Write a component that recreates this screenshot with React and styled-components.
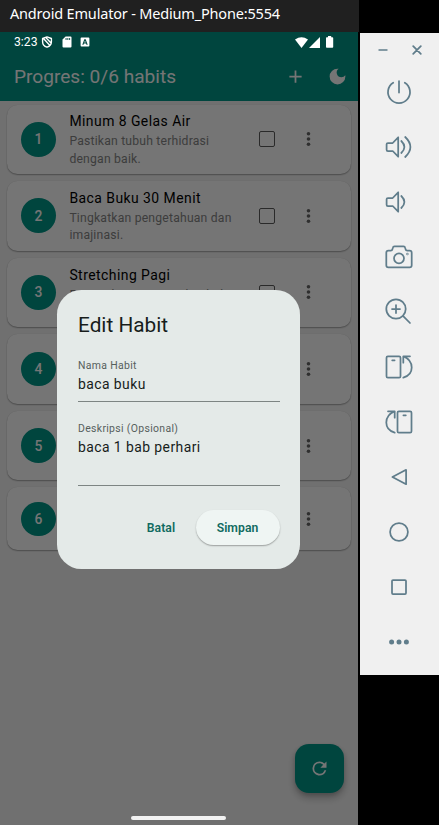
import React from "react";
import styled, { createGlobalStyle } from "styled-components";

const GlobalStyle = createGlobalStyle`
  *, *::before, *::after { box-sizing: border-box; }
  body { margin: 0; background: #000; overflow: hidden; }
`;

const Desktop = styled.div`
  display: flex;
  gap: 2px;
  width: 439px;
  height: 825px;
  background: #000;
  font-family: Roboto, sans-serif;
`;

const EmulatorWindow = styled.div`
  display: flex;
  flex-direction: column;
  width: 358px;
`;

const WindowTitle = styled.div`
  flex: none;
  width: 359px;
  height: 32px;
  padding-left: 10px;
  background: #202020;
  color: #fff;
  font: 14.5px/27px "Noto Sans", "Open Sans", sans-serif;
  letter-spacing: -0.18px;
  white-space: nowrap;
`;

const Screen = styled.main`
  position: relative;
  display: flex;
  flex-direction: column;
  flex: 1;
  min-height: 0;
  background: #f5f5f5;
`;

const AppBar = styled.header`
  display: flex;
  align-items: center;
  height: 68.5px;
  padding: 21px 10.5px 0 14px;
  background: #009688;
  color: #fff;
`;

const AppTitle = styled.h1`
  flex: 1;
  margin: 0;
  font-size: 19.1px;
  font-weight: 400;
  line-height: 24px;
`;

const AppActions = styled.div`
  display: flex;
  gap: 21px;
`;

const StatusBar = styled.div`
  position: absolute;
  inset: 0 0 auto 0;
  display: flex;
  align-items: center;
  height: 20px;
  padding: 0 24px 0 14px;
  color: #fff;
  font-size: 12.2px;
`;

const StatusGroup = styled.div`
  display: flex;
  align-items: center;
  gap: ${(p) => p.$gap}px;
  margin-left: ${(p) => (p.$end ? "auto" : "3.5px")};
`;

const HabitList = styled.ul`
  display: flex;
  flex-direction: column;
  gap: 7px;
  margin: 0;
  padding: 4px 7px;
  list-style: none;
`;

const HabitCard = styled.li`
  display: flex;
  align-items: center;
  height: ${(p) => (p.$short ? 63 : 69.6)}px;
  padding: 0 14px;
  border-radius: 10.5px;
  background: #fff;
  box-shadow: 0 1px 1.5px rgba(0, 0, 0, 0.32), 0 0 1px rgba(0, 0, 0, 0.12);
`;

const HabitNumber = styled.div`
  display: grid;
  place-items: center;
  flex: none;
  width: 34.8px;
  height: 34.8px;
  margin-right: 13.6px;
  border-radius: 50%;
  background: #009688;
  color: #fff;
  font-size: 13.9px;
  font-weight: 500;
`;

const HabitText = styled.div`
  width: 170px;
`;

const HabitName = styled.div`
  color: #000;
  font-size: 13.93px;
  line-height: 21px;
  letter-spacing: 0.46px;
  white-space: nowrap;
`;

const HabitDescription = styled.div`
  margin-bottom: -1px;
  padding-top: 1px;
  color: #858585;
  font-size: 12.18px;
  line-height: 17.4px;
  letter-spacing: 0.2px;
`;

const Checkbox = styled.span`
  width: 15.7px;
  height: 15.7px;
  margin: 0 0 0 19.5px;
  border: 1.5px solid #5c5c5c;
  border-radius: 2px;
`;

const MoreDots = styled.svg`
  width: 5px;
  height: 16px;
  margin-left: 31.5px;
  fill: #666;
`;

const RefreshButton = styled.button`
  position: absolute;
  right: 14px;
  bottom: 32px;
  display: grid;
  place-items: center;
  width: 49px;
  height: 49px;
  padding: 0;
  border: 0;
  border-radius: 14px;
  background: #009688;
  color: #fff;
  box-shadow: 0 5px 9px rgba(0, 0, 0, 0.24), 0 2px 4px rgba(0, 0, 0, 0.14);
`;

const Scrim = styled.div`
  position: absolute;
  inset: 0;
  background: rgba(0, 0, 0, 0.54);
`;

const HomeIndicator = styled.div`
  position: absolute;
  left: 131px;
  bottom: 5px;
  width: 95px;
  height: 4px;
  border-radius: 2px;
  background: #f2f2f2;
`;

const Dialog = styled.section`
  position: absolute;
  left: 57px;
  top: 258px;
  display: flex;
  flex-direction: column;
  width: 243px;
  height: 279px;
  padding: 21px 20.5px 24px 21px;
  border-radius: 24.4px;
  background: #e4eae8;
`;

const DialogTitle = styled.h2`
  margin: 0 0 14px;
  color: #171d1b;
  font-size: 20.8px;
  font-weight: 400;
  line-height: 28px;
`;

const Field = styled.div`
  display: flex;
  flex-direction: column;
  height: ${(p) => p.$height}px;
  margin-bottom: ${(p) => p.$after}px;
  padding-top: 5.5px;
  border-bottom: 1px solid #7d8583;
`;

const FieldLabel = styled.span`
  color: #56605d;
  font-size: 10.45px;
  line-height: 14px;
  letter-spacing: 0.33px;
`;

const FieldValue = styled.span`
  color: #171d1b;
  font-size: 13.93px;
  line-height: 23px;
  letter-spacing: 0.43px;
`;

const DialogActions = styled.div`
  display: flex;
  justify-content: flex-end;
  gap: 7px;
  margin-top: auto;
`;

const DialogButton = styled.button`
  height: 35px;
  width: ${(p) => (p.$raised ? 84 : 55)}px;
  padding: 0;
  border: 0;
  border-radius: 17.5px;
  background: ${(p) => (p.$raised ? "#eff5f3" : "transparent")};
  box-shadow: ${(p) => (p.$raised ? "0 1px 1.5px rgba(0,0,0,.32)" : "none")};
  color: #106a60;
  font: 600 12.18px/36px Roboto, sans-serif;
  letter-spacing: 0.05px;
`;

const ControlPanel = styled.aside`
  display: flex;
  flex-direction: column;
  width: 79px;
  height: 642px;
  margin-top: 33px;
  background: #f0f0f0;
  color: #607d8b;
`;

const PanelHeader = styled.div`
  display: flex;
  align-items: center;
  gap: 24px;
  height: 31.5px;
  padding: 3px 0 0 17.5px;
`;

const PanelButton = styled.div`
  display: grid;
  place-items: center;
  width: 78px;
  height: 55px;
`;

const LineIcon = styled.svg`
  display: block;
  fill: none;
  stroke: currentColor;
  stroke-width: 1.75;
  stroke-linecap: round;
  stroke-linejoin: round;
`;

const SolidIcon = styled.svg`
  display: block;
  fill: currentColor;
`;

const Speaker = () => (
  <path d="M-12.4-2.7q0-1.3 1.3-1.3h4.8L-.8-9.7V9.7L-6.3 4h-4.8q-1.3 0-1.3-1.3z" />
);

const panelIcons = [
  ["power", <><path d="M-5.8-9.3A11 11 0 1 0 5.8-9.3" /><path d="M0-11V.5" /></>],
  ["volume-up", <><Speaker /><path d="M2.3-6Q8.5 0 2.3 6M6.2-10Q16.6 0 6.2 10" /></>],
  ["volume-down", <><Speaker /><path d="M2.3-6Q8.5 0 2.3 6" /></>],
  ["camera", <><path d="M-10.6-6.4h2.3q1.5 0 1.8-1.5l.3-1.2q.3-1.6 1.7-1.6h9q1.4 0 1.7 1.6l.3 1.2q.3 1.5 1.8 1.5h2.3q2.1 0 2.1 2.1V8.2q0 2.1-2.1 2.1h-21.2q-2.1 0-2.1-2.1V-4.3q0-2.1 2.1-2.1z" /><circle cx="0" cy="1.3" r="5" /><circle cx="8.4" cy="-3" r=".3" /></>],
  ["zoom", <><circle cx="-3" cy="-3" r="9.7" /><path d="M4.2 4.2L11 11M-7-3h8M-3-7v8" /></>],
  ["rotate-left", <><rect x="-12.5" y="-10.7" width="14" height="21.4" rx="1.4" /><path d="M-6.8-6.7h2.4M11-10.7H4.3v6.4M4.3-10.7C15.5-6 15.5 7.5 4.3 10.7" /></>],
  ["rotate-right", <><rect x="-1.5" y="-10.7" width="14" height="21.4" rx="1.4" /><path d="M4.4-6.7h2.4M-11-10.7h6.7v6.4M-4.3-10.7C-15.5-6-15.5 7.5-4.3 10.7" /></>],
  ["back", <path d="M-6.6 0L7.1-7.2V7.2z" />],
  ["home", <circle r="8.9" />],
  ["overview", <rect x="-7" y="-7" width="14" height="14" rx="1" />],
  ["more", <g fill="currentColor" stroke="none"><circle cx="-7.4" r="2.5" /><circle r="2.5" /><circle cx="7.4" r="2.5" /></g>],
];

const habits = [
  { name: "Minum 8 Gelas Air", description: "Pastikan tubuh terhidrasi dengan baik." },
  { name: "Baca Buku 30 Menit", description: "Tingkatkan pengetahuan dan imajinasi." },
  { name: "Stretching Pagi", description: "Regangkan otot untuk tubuh yang lebih segar." },
  {},
  {},
  { short: true },
];

function Habit({ number, habit }) {
  return (
    <HabitCard $short={habit.short}>
      <HabitNumber>{number}</HabitNumber>
      <HabitText>
        {habit.name && <HabitName>{habit.name}</HabitName>}
        {habit.description && <HabitDescription>{habit.description}</HabitDescription>}
      </HabitText>
      <Checkbox />
      <MoreDots viewBox="0 0 5 16">
        <circle cx="2.5" cy="2.8" r="1.8" />
        <circle cx="2.5" cy="8" r="1.8" />
        <circle cx="2.5" cy="13.2" r="1.8" />
      </MoreDots>
    </HabitCard>
  );
}

function PhoneStatus() {
  return (
    <StatusBar>
      <span>3:23</span>
      <StatusGroup $gap={8.5}>
        <LineIcon width="12" height="12" viewBox="0 0 12 12">
          <path d="M6 .9l4.400 1.600v3.200C10.400 8.400 8.700 10.300 6 11.200 3.300 10.300 1.600 8.400 1.600 5.700V2.500zM2.500 2.500l6.200 6.700M5 1.800l4.800 5" strokeWidth="1.4" />
        </LineIcon>
        <SolidIcon width="10" height="12" viewBox="0 0 10 12">
          <path fillRule="evenodd" d="M3.600.500H8.500q1 0 1 1v9q0 1-1 1h-7q-1 0-1-1V3.600zM3.600 2v2h.9V2zM5.400 2v2h.9V2zM7.200 2v2h.9V2z" />
        </SolidIcon>
        <SolidIcon width="10" height="10" viewBox="0 0 10 10">
          <path fillRule="evenodd" d="M1.500.600h7q.9 0 .9.900v7q0 .9-.9.900h-7q-.9 0-.9-.9v-7q0-.9.900-.9zM4.300 2.200L2.300 7.800h1.200L3.900 6.600h2.200l.4 1.200h1.200L5.700 2.200zM5 3.500l.7 2.100H4.300z" />
        </SolidIcon>
      </StatusGroup>
      <StatusGroup $end $gap={1}>
        <SolidIcon width="13" height="11" viewBox="0 0 13 11">
          <path d="M0 2.500Q6.500-2.200 13 2.500L6.500 11z" />
        </SolidIcon>
        <SolidIcon width="11" height="11" viewBox="0 0 11 11">
          <path d="M11 0v11H0z" />
        </SolidIcon>
        <SolidIcon width="13" height="12" viewBox="0 0 13 12">
          <path d="M7 0h3.200v1.200h1.200q.8 0 .8.800v9q0 .8-.8.800H5.800Q5 11.800 5 11V2q0-.8.800-.8H7z" />
        </SolidIcon>
      </StatusGroup>
    </StatusBar>
  );
}

export default function App() {
  return (
    <>
      <GlobalStyle />
      <Desktop>
        <EmulatorWindow>
          <WindowTitle>Android Emulator - Medium_Phone:5554</WindowTitle>
          <Screen>
            <AppBar>
              <AppTitle>Progres: 0/6 habits</AppTitle>
              <AppActions>
                <SolidIcon width="21" height="21" viewBox="0 0 24 24">
                  <path d="M19 13h-6v6h-2v-6H5v-2h6V5h2v6h6v2z" />
                </SolidIcon>
                <SolidIcon width="21" height="21" viewBox="0 0 24 24">
                  <path d="M12 3a9 9 0 1 0 9 9c0-.46-.04-.92-.1-1.360a5.389 5.389 0 0 1-4.400 2.260 5.403 5.403 0 0 1-3.140-9.800c-.44-.06-.9-.1-1.360-.1z" />
                </SolidIcon>
              </AppActions>
            </AppBar>
            <HabitList>
              {habits.map((habit, i) => (
                <Habit key={i} number={i + 1} habit={habit} />
              ))}
            </HabitList>
            <RefreshButton aria-label="Refresh">
              <SolidIcon width="21" height="21" viewBox="0 0 24 24">
                <path d="M17.650 6.350A7.958 7.958 0 0 0 12 4a8 8 0 1 0 7.730 10h-2.080A6 6 0 1 1 12 6c1.660 0 3.140.69 4.220 1.780L13 11h7V4z" />
              </SolidIcon>
            </RefreshButton>
            <Scrim />
            <PhoneStatus />
            <Dialog role="dialog" aria-label="Edit Habit">
              <DialogTitle>Edit Habit</DialogTitle>
              <Field $height={49} $after={14}>
                <FieldLabel>Nama Habit</FieldLabel>
                <FieldValue>baca buku</FieldValue>
              </Field>
              <Field $height={69.5} $after={0}>
                <FieldLabel>Deskripsi (Opsional)</FieldLabel>
                <FieldValue>baca 1 bab perhari</FieldValue>
              </Field>
              <DialogActions>
                <DialogButton>Batal</DialogButton>
                <DialogButton $raised>Simpan</DialogButton>
              </DialogActions>
            </Dialog>
            <HomeIndicator />
          </Screen>
        </EmulatorWindow>
        <ControlPanel>
          <PanelHeader>
            <LineIcon width="10" height="10" viewBox="0 0 10 10">
              <path d="M1 5h8" strokeWidth="1.4" />
            </LineIcon>
            <LineIcon width="10" height="10" viewBox="0 0 10 10">
              <path d="M1.200 1.200l7.600 7.600M8.800 1.200L1.200 8.800" />
            </LineIcon>
          </PanelHeader>
          {panelIcons.map(([name, drawing]) => (
            <PanelButton key={name}>
              <LineIcon width="28" height="28" viewBox="-14 -14 28 28">
                {drawing}
              </LineIcon>
            </PanelButton>
          ))}
        </ControlPanel>
      </Desktop>
    </>
  );
}
